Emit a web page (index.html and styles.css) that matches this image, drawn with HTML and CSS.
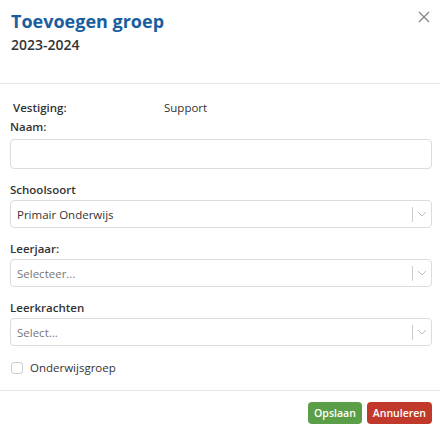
FILE: index.html
```
<!DOCTYPE html>
<html>
<head>
<meta charset="utf-8">
<link rel="stylesheet" href="styles.css">
</head>
<body>
<div class="modal">
  <div class="header">
    <div class="titles">
      <h1 class="title">Toevoegen groep</h1>
      <div class="subtitle">2023-2024</div>
    </div>
    <button class="close" aria-label="Sluiten">
      <svg width="12" height="12" viewBox="0 0 12 12"><path d="M1 1L11 11M11 1L1 11" stroke="#888" stroke-width="1.4" fill="none"/></svg>
    </button>
  </div>
  <div class="body">
    <div class="info-row">
      <span class="info-label">Vestiging:</span>
      <span class="info-value">Support</span>
    </div>
    <label class="label label-naam">Naam:</label>
    <div class="input input-naam"></div>

    <label class="label label-gap">Schoolsoort</label>
    <div class="input select"><span class="value">Primair Onderwijs</span><span class="arrow"><svg width="10" height="6" viewBox="0 0 10 6"><path d="M1 1L5 5L9 1" stroke="#bbb" stroke-width="1" fill="none"/></svg></span></div>

    <label class="label label-gap">Leerjaar:</label>
    <div class="input select"><span class="placeholder">Selecteer...</span><span class="arrow"><svg width="10" height="6" viewBox="0 0 10 6"><path d="M1 1L5 5L9 1" stroke="#bbb" stroke-width="1" fill="none"/></svg></span></div>

    <label class="label label-gap">Leerkrachten</label>
    <div class="input select"><span class="placeholder">Select...</span><span class="arrow"><svg width="10" height="6" viewBox="0 0 10 6"><path d="M1 1L5 5L9 1" stroke="#bbb" stroke-width="1" fill="none"/></svg></span></div>

    <div class="check-row">
      <span class="checkbox"></span>
      <span class="check-label">Onderwijsgroep</span>
    </div>
  </div>
  <div class="footer">
    <button class="btn btn-save">Opslaan</button>
    <button class="btn btn-cancel">Annuleren</button>
  </div>
</div>
</body>
</html>
```
FILE: styles.css
```
* { box-sizing: border-box; }
html, body { margin: 0; padding: 0; background: #fff; }
body {
  font-family: "Open Sans", "Noto Sans", sans-serif;
  color: #333;
  width: 440px;
  height: 436px;
  overflow: hidden;
}
.modal { display: flex; flex-direction: column; height: 436px; }
.header {
  flex-shrink: 0;
  display: flex;
  justify-content: space-between;
  align-items: flex-start;
  padding: 9px 8px 0 11px;
  height: 84px;
  border-bottom: 1px solid #e5e5e5;
}
.title {
  margin: 0;
  font-size: 18px;
  font-weight: 700;
  color: #1a5e9e;
  line-height: 24px;
}
.subtitle {
  margin-top: 1px;
  font-size: 14px;
  font-weight: 600;
  color: #333;
  line-height: 22px;
}
.close {
  border: 0;
  background: none;
  padding: 0;
  margin-top: 1px;
  margin-right: 1px;
  width: 14px;
  height: 14px;
  display: flex;
  align-items: center;
  justify-content: center;
  cursor: pointer;
}
.body {
  flex: 1;
  min-height: 0;
  padding: 16px 8px 0 10px;
  font-size: 11.5px;
}
.info-row { display: flex; line-height: 16px; padding-left: 3px; }
.info-label { width: 151px; font-weight: 600; }
.info-value { color: #333; }
.label {
  display: block;
  font-weight: 600;
  line-height: 16px;
  color: #333;
}
.label-naam { margin-top: 3px; margin-bottom: 4px; }
.label-gap { margin-top: 13px; margin-bottom: 2px; }
.input {
  height: 28px;
  border: 1px solid #dcdcdc;
  border-radius: 4px;
  display: flex;
  align-items: center;
  padding-left: 6px;
  background: #fff;
}
.input-naam { height: 30px; }
.select { justify-content: space-between; }
.value { color: #333; }
.placeholder { color: #777; }
.arrow {
  display: flex;
  align-items: center;
  height: 15px;
  border-left: 1px solid #ccc;
  padding: 0 4px 0 4px;
}
.check-row {
  display: flex;
  align-items: center;
  margin-top: 14px;
  padding-left: 1px;
  line-height: 16px;
}
.checkbox {
  width: 12px;
  height: 12px;
  border: 1px solid #ccc;
  border-radius: 3px;
  margin-right: 7px;
}
.check-label { color: #333; }
.footer {
  flex-shrink: 0;
  border-top: 1px solid #e5e5e5;
  height: 46px;
  display: flex;
  justify-content: flex-end;
  align-items: flex-start;
  padding: 11px 8px 0 0;
  gap: 5px;
}
.btn {
  border: 0;
  border-radius: 4px;
  color: #fff;
  font-family: "Open Sans", sans-serif;
  font-size: 10.5px;
  font-weight: 600;
  height: 22px;
  padding: 0 6px;
  cursor: pointer;
}
.btn-save { background: #5a9e47; }
.btn-cancel { background: #c0392b; }
```
